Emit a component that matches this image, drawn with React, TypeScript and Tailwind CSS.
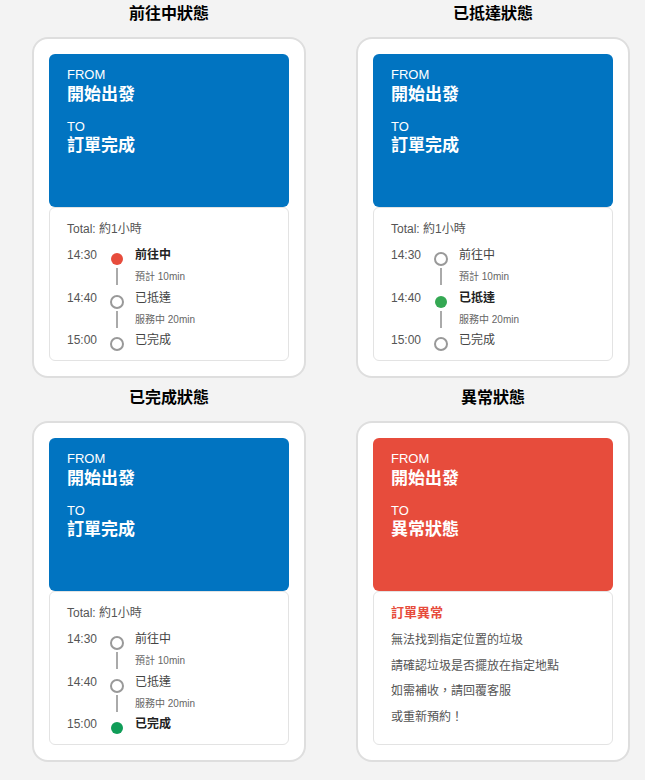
import { FC } from 'react'

type Step = {
  time: string
  label: string
  sub?: string
}

const steps: Step[] = [
  { time: '14:30', label: '前往中', sub: '預計 10min' },
  { time: '14:40', label: '已抵達', sub: '服務中 20min' },
  { time: '15:00', label: '已完成' }
]

const font = { fontFamily: '"Liberation Sans", "Noto Sans CJK TC", sans-serif' }

const RoutePanel: FC<{ to: string; color: string }> = ({ to, color }) => (
  <div className={`${color} h-[153px] rounded-[6px] px-[18px] pt-[13px] text-white`}>
    <div className="text-[13px] leading-[15px]">FROM</div>
    <div className="mt-[1px] text-[17px] font-bold leading-[24px]">開始出發</div>
    <div className="mt-[12px] text-[13px] leading-[15px]">TO</div>
    <div className="text-[17px] font-bold leading-[24px]">{to}</div>
  </div>
)

const Timeline: FC<{ active: number; dot: string }> = ({ active, dot }) => (
  <div className="h-[154px] rounded-[6px] border border-[#e3e3e3] bg-white px-[17px] pt-[12px]">
    <div className="text-[12px] leading-[18px] text-[#555]">Total: 約1小時</div>
    <div className="mt-[8px]">
      {steps.map((step, i) => {
        const isActive = i === active
        const isLast = i === steps.length - 1
        return (
          <div key={step.time} className={`flex ${isLast ? '' : 'h-[42.5px]'}`}>
            <div className="w-[43px] text-[12px] leading-[18px] text-[#555]">{step.time}</div>
            <div className="flex w-[14px] flex-col items-center">
              <div className="mt-[6px] flex h-[14px] w-[14px] items-center justify-center">
                {isActive ? (
                  <div className={`h-[12px] w-[12px] rounded-full ${dot}`} />
                ) : (
                  <div className="h-[14px] w-[14px] rounded-full border-2 border-[#999] bg-white" />
                )}
              </div>
              {!isLast && <div className="mt-[2px] h-[17px] w-[2px] bg-[#aaa]" />}
            </div>
            <div className="ml-[11px]">
              <div
                className={`text-[12px] leading-[18px] ${
                  isActive ? 'font-bold text-[#222]' : 'text-[#444]'
                }`}
              >
                {step.label}
              </div>
              {step.sub && (
                <div className="mt-[6px] text-[10px] leading-[14px] text-[#666]">{step.sub}</div>
              )}
            </div>
          </div>
        )
      })}
    </div>
  </div>
)

const ErrorBox: FC = () => (
  <div className="h-[154px] rounded-[6px] border border-[#e3e3e3] bg-white px-[17px] pt-[12px]">
    <div className="text-[13px] font-bold leading-[18px] text-[#e74c3c]">訂單異常</div>
    <div className="mt-[6px] text-[12px] leading-[25.5px] text-[#555]">
      <div>無法找到指定位置的垃圾</div>
      <div>請確認垃圾是否擺放在指定地點</div>
      <div>如需補收，請回覆客服</div>
      <div>或重新預約！</div>
    </div>
  </div>
)

const StatusCard: FC<{ title: string; children: React.ReactNode }> = ({ title, children }) => (
  <div>
    <h2 className="text-center text-[16px] font-bold leading-[24px] text-black">{title}</h2>
    <div className="mx-[16px] mt-[11px] rounded-[16px] border-2 border-[#dedede] bg-white p-[15px]">
      {children}
    </div>
  </div>
)

const App: FC = () => {
  return (
    <div className="min-h-[780px] w-full bg-[#f3f3f3] pt-[2px]" style={font}>
      <div className="grid grid-cols-[306px_306px] gap-x-[18px] gap-y-[8px] pl-[16px]">
        {/* 前往中 */}
        <StatusCard title="前往中狀態">
          <RoutePanel to="訂單完成" color="bg-[#0174c1]" />
          <Timeline active={0} dot="bg-[#e74c3c]" />
        </StatusCard>

        {/* 已抵達 */}
        <StatusCard title="已抵達狀態">
          <RoutePanel to="訂單完成" color="bg-[#0174c1]" />
          <Timeline active={1} dot="bg-[#34a853]" />
        </StatusCard>

        {/* 已完成 */}
        <StatusCard title="已完成狀態">
          <RoutePanel to="訂單完成" color="bg-[#0174c1]" />
          <Timeline active={2} dot="bg-[#0f9d58]" />
        </StatusCard>

        {/* 異常 */}
        <StatusCard title="異常狀態">
          <RoutePanel to="異常狀態" color="bg-[#e74c3c]" />
          <ErrorBox />
        </StatusCard>
      </div>
    </div>
  )
}

export default App
